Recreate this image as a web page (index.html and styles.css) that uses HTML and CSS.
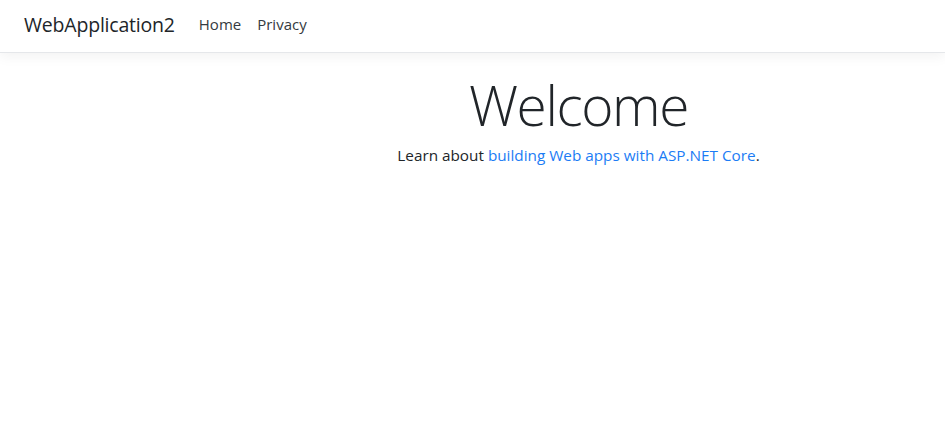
FILE: index.html
```html
<!DOCTYPE html>
<html lang="en">
<head>
<meta charset="utf-8">
<title>Home Page - WebApplication2</title>
<link rel="stylesheet" href="styles.css">
</head>
<body>
<header class="navbar">
  <a class="brand" href="#">WebApplication2</a>
  <nav class="nav">
    <a class="nav-link" href="#">Home</a>
    <a class="nav-link" href="#">Privacy</a>
  </nav>
</header>
<main class="main">
  <div class="text-center">
    <h1 class="display">Welcome</h1>
    <p class="lead-line">Learn about <a class="link" href="#">building Web apps with ASP.NET Core</a>.</p>
  </div>
</main>
</body>
</html>
```
FILE: styles.css
```css
* { box-sizing: border-box; }
html, body { margin: 0; padding: 0; background: #fff; }
body {
  font-family: "Open Sans", "Noto Sans", sans-serif;
  font-size: 16px;
  color: #212529;
}
.navbar {
  display: flex;
  align-items: center;
  height: 53px;
  padding: 0 24px 4px;
  border-bottom: 1px solid #e5e7ea;
  box-shadow: 0 4px 12px rgba(0,0,0,0.05);
}
.brand {
  font-size: 19.5px;
  color: #212529;
  text-decoration: none;
  margin-right: 24px;
  letter-spacing: -0.2px;
}
.nav { display: flex; gap: 16px; }
.nav-link {
  font-size: 15px;
  color: #343a40;
  text-decoration: none;
}
.main {
  padding-left: 212px;
}
.text-center { text-align: center; }
.display {
  font-weight: 300;
  font-size: 55px;
  line-height: 1.2;
  margin: 0;
  padding-top: 19px;
  letter-spacing: -1.4px;
}
.lead-line {
  margin: 7px 0 0;
  font-size: 15.3px;
}
.link { color: #1b7cf5; text-decoration: none; }
```
